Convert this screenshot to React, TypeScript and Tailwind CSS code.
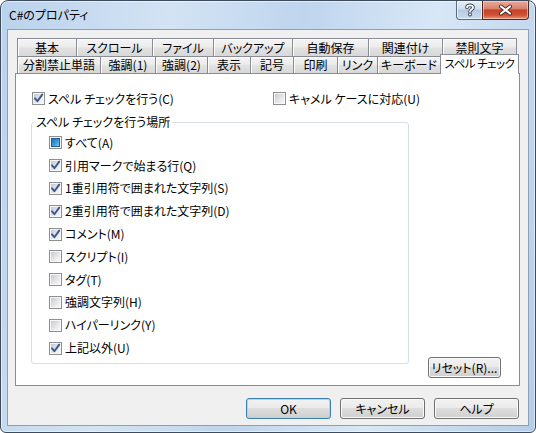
type CheckState = "on" | "off" | "mixed"

const row1: [string, number][] = [
  ["基本", 59],
  ["スクロール", 76],
  ["ファイル", 61],
  ["バックアップ", 79],
  ["自動保存", 76],
  ["関連付け", 74],
  ["禁則文字", 75],
]

const row2: [string, number][] = [
  ["分割禁止単語", 83],
  ["強調(1)", 55],
  ["強調(2)", 52],
  ["表示", 43],
  ["記号", 43],
  ["印刷", 44],
  ["リンク", 40],
  ["キーボード", 63],
]

const places: [string, CheckState][] = [
  ["すべて(A)", "mixed"],
  ["引用マークで始まる行(Q)", "on"],
  ["1重引用符で囲まれた文字列(S)", "on"],
  ["2重引用符で囲まれた文字列(D)", "on"],
  ["コメント(M)", "on"],
  ["スクリプト(I)", "off"],
  ["タグ(T)", "off"],
  ["強調文字列(H)", "off"],
  ["ハイパーリンク(Y)", "off"],
  ["上記以外(U)", "on"],
]

function CheckBox({ state }: { state: CheckState }) {
  return (
    <span className="relative flex h-[13px] w-[13px] shrink-0 items-center justify-center border border-[#8e8f8f] bg-[#f7f7f7]">
      {state === "mixed" ? (
        <span className="h-[9px] w-[9px] border border-[#1f5f99] bg-[linear-gradient(135deg,#1d74b8,#3c9bd6_55%,#7cc8ef)]" />
      ) : (
        <span className="h-[9px] w-[9px] bg-[linear-gradient(135deg,#c6cad0,#e4e6e9_55%,#f8f8f8)]" />
      )}
      {state === "on" && (
        <svg className="absolute left-[-1px] top-[-1px]" width="13" height="13" viewBox="0 0 13 13">
          <path d="M3 6.3 L5.4 9.2 L10.2 2.6" fill="none" stroke="#3b5790" strokeWidth="1.9" strokeLinecap="round" strokeLinejoin="round" />
        </svg>
      )}
    </span>
  )
}

function Check({ state, label, width }: { state: CheckState; label: string; width?: string }) {
  return (
    <div className={`flex items-center gap-[3px] ${width ?? ""}`}>
      <CheckBox state={state} />
      <span className="whitespace-nowrap leading-[14px]">{label}</span>
    </div>
  )
}

function Button({ label, primary, className }: { label: string; primary?: boolean; className: string }) {
  return (
    <div
      className={`flex items-center justify-center rounded-[3px] border bg-[linear-gradient(#f2f2f2,#ebebeb_45%,#dddddd_50%,#cfcfcf)] leading-none ${
        primary
          ? "border-[#3c7fb1] shadow-[inset_0_0_0_1px_#9fdcf8]"
          : "border-[#707070] shadow-[inset_0_0_0_1px_#fafafa]"
      } ${className}`}
    >
      {label}
    </div>
  )
}

function Tab({ label, width, last }: { label: string; width: number; last?: boolean }) {
  return (
    <div
      style={{ width }}
      className={`flex h-full items-center justify-center border-t border-l border-[#898c95] bg-[linear-gradient(#f4f4f4,#ececec_45%,#e1e1e1_55%,#d8d8d8)] shadow-[inset_1px_1px_0_#fcfcfc] whitespace-nowrap ${
        last ? "border-r" : ""
      }`}
    >
      {label}
    </div>
  )
}

export default function App() {
  return (
    <div className="flex h-[433px] w-[536px] flex-col rounded-t-[8px] rounded-b-[6px] border border-[#3d4b5c] bg-[linear-gradient(100deg,#bad2ec_0%,#d3e3f4_28%,#bfd5ee_50%,#d8e7f6_72%,#b4cde9_100%)] px-[6px] font-['Noto_Sans_CJK_JP',sans-serif] text-[12px] leading-none text-black shadow-[inset_0_0_0_1px_rgba(255,255,255,0.55)] [font-feature-settings:'palt']">
      {/* title bar */}
      <div className="flex h-[28px] shrink-0 items-start">
        <div className="flex h-full items-center pl-[2px] text-[12px] text-[#000]">C#のプロパティ</div>
        <div className="ml-auto flex">
          <div className="flex h-[19px] w-[27px] items-center justify-center rounded-bl-[4px] border border-t-0 border-[#5b6b7f] bg-[linear-gradient(#e6eef7,#cfdced_45%,#b4c9e1_50%,#cadcef)] shadow-[inset_0_0_0_1px_rgba(255,255,255,0.6)]">
            <svg width="12" height="14" viewBox="0 0 12 14">
              <path d="M3 4.4 C3 1.6 9 1.6 9 4.4 C9 6.6 6 6.6 6 8.8" fill="none" stroke="#3a4350" strokeWidth="3.6" strokeLinecap="round" />
              <circle cx="6" cy="11.6" r="1.9" fill="#3a4350" />
              <path d="M3 4.4 C3 1.6 9 1.6 9 4.4 C9 6.6 6 6.6 6 8.8" fill="none" stroke="#fff" strokeWidth="1.8" strokeLinecap="round" />
              <circle cx="6" cy="11.6" r="1" fill="#fff" />
            </svg>
          </div>
          <div className="-ml-px flex h-[19px] w-[47px] items-center justify-center rounded-br-[4px] border border-t-0 border-[#4a2a25] bg-[linear-gradient(#e9ab9c,#d9826d_42%,#c4432a_50%,#cf5032_78%,#e7957a)] shadow-[inset_0_0_0_1px_rgba(255,220,210,0.55)]">
            <svg width="15" height="12" viewBox="0 0 15 12">
              <path d="M3 2.5 L12 9.5 M12 2.5 L3 9.5" stroke="#4a2420" strokeWidth="4" strokeLinecap="round" />
              <path d="M3 2.5 L12 9.5 M12 2.5 L3 9.5" stroke="#fff" strokeWidth="2.2" strokeLinecap="round" />
            </svg>
          </div>
        </div>
      </div>

      {/* client area */}
      <div className="flex h-[397px] shrink-0 flex-col border border-[#8d9fb4] bg-[#f0f0f0]">
        <div className="mt-[8px] flex h-[18px] pl-[9px]">
          {row1.map(([label, w], i) => (
            <Tab key={label} label={label} width={w} last={i === row1.length - 1} />
          ))}
        </div>
        <div className="flex h-[17px] items-end pl-[9px]">
          {row2.map(([label, w]) => (
            <Tab key={label} label={label} width={w} />
          ))}
          <div className="relative z-10 -mb-px flex h-[20px] w-[79px] items-start justify-center border-x border-t border-[#898c95] bg-white pt-[3px] text-[11.5px] tracking-[-0.5px] whitespace-nowrap">
            スペル チェック
          </div>
        </div>

        <div className="ml-[7px] h-[313px] w-[505px] shrink-0 border border-[#898c95] bg-white pt-[18px] pl-[16px]">
          <div className="flex h-[13px] items-center">
            <Check state="on" label="スペル チェックを行う(C)" width="w-[241px]" />
            <Check state="off" label="キャメル ケースに対応(U)" />
          </div>

          <div className="-ml-px mt-[17px] flex items-start">
            <div className="relative h-[242px] w-[378px] shrink-0 rounded-[3px] border border-[#d5dfe5] pt-[8.5px] pl-[17px]">
              <span className="absolute -top-[9px] left-[2px] bg-white px-[2px] leading-[16px] whitespace-nowrap">
                スペル チェックを行う場所
              </span>
              {places.map(([label, state]) => (
                <div key={label} className="flex h-[22.8px] items-center">
                  <Check state={state} label={label} />
                </div>
              ))}
            </div>
            <Button label="リセット(R)..." className="ml-[19px] mt-[235px] h-[21px] w-[73px]" />
          </div>
        </div>

        <div className="mt-[12px] flex justify-end gap-[9px] pr-[9px]">
          <Button label="OK" primary className="h-[21px] w-[85px]" />
          <Button label="キャンセル" className="h-[21px] w-[85px]" />
          <Button label="ヘルプ" className="h-[21px] w-[85px]" />
        </div>
      </div>
    </div>
  )
}
